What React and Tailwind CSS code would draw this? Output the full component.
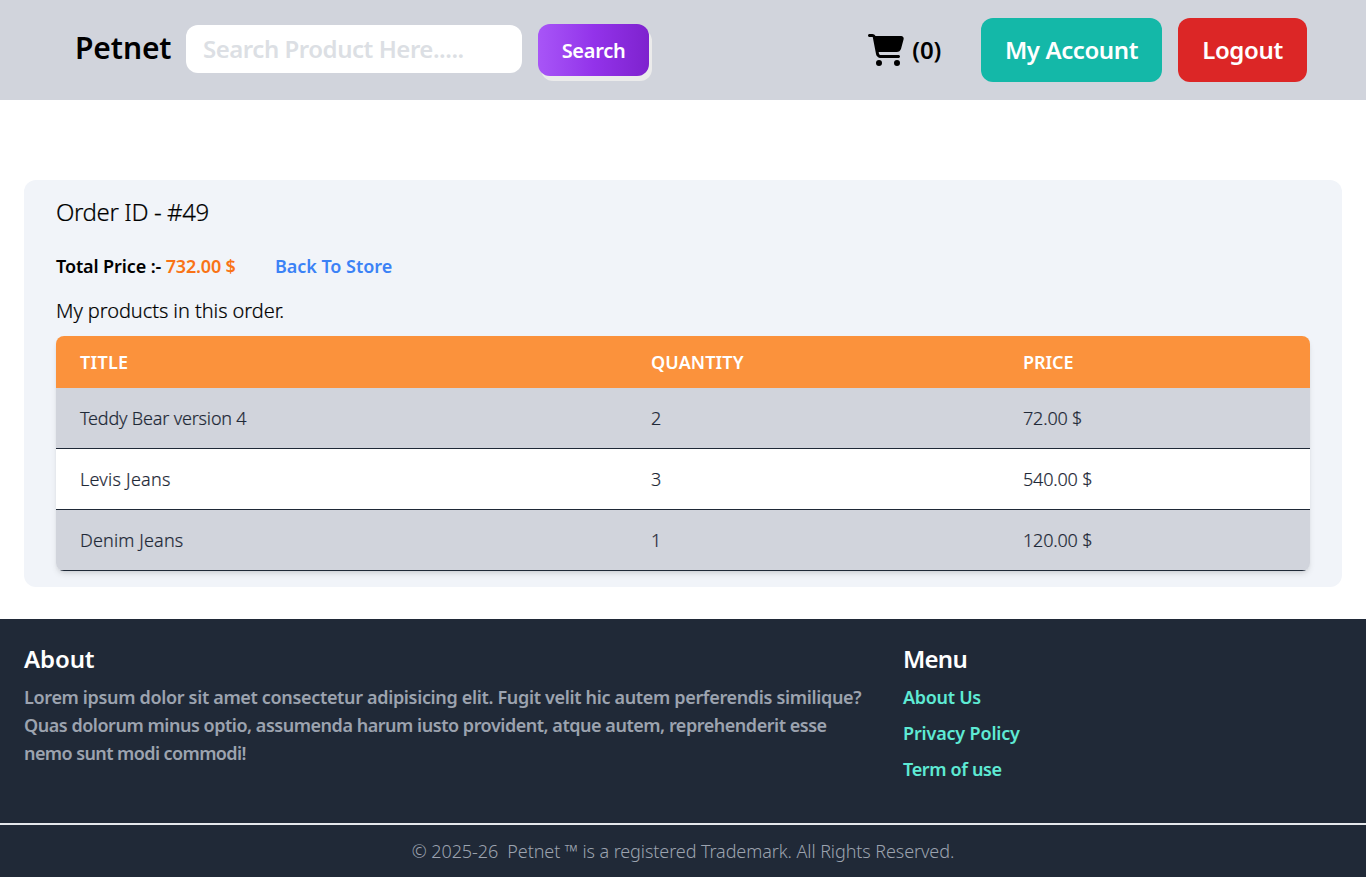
import { FaCartShopping } from "react-icons/fa6";

const items = [
  { title: "Teddy Bear version 4", spacing: "tracking-[-0.18px]", quantity: 2, price: "72.00 $" },
  { title: "Levis Jeans", spacing: "tracking-[0.25px]", quantity: 3, price: "540.00 $" },
  { title: "Denim Jeans", spacing: "tracking-[0.15px]", quantity: 1, price: "120.00 $" },
];

function Header() {
  return (
    <header className="flex h-[100px] items-center bg-[#d1d4dc] pr-[59px] pl-[75px] font-semibold">
      <a href="#" className="w-[111px] pb-[5px] text-[30px] leading-9 tracking-[-0.1px]">
        Petnet
      </a>
      <input
        type="text"
        placeholder="Search Product Here....."
        className="mb-0.5 h-12 w-[336px] rounded-xl bg-white px-[17px] pb-0.5 text-2xl tracking-[-0.47px] outline-none placeholder:text-[#dcdfe4]"
      />
      <button className="ml-4 h-[52px] w-[111px] rounded-xl bg-linear-to-r from-[#a855f7] via-[#9333ea] to-[#7e22ce] pt-0.5 text-xl tracking-[-0.3px] text-white shadow-[3px_5px_0_0_#ebebeb]">
        Search
      </button>
      <a href="#" className="ml-auto flex items-center gap-2 text-2xl tracking-[-0.2px]">
        <FaCartShopping className="h-8 w-9" />
        <span>(0)</span>
      </a>
      <a href="#" className="ml-10 flex h-16 w-[181px] items-center justify-center rounded-xl bg-[#14b8a8] text-2xl tracking-[-0.4px] text-white">
        My Account
      </a>
      <a href="#" className="ml-4 flex h-16 w-[129px] items-center justify-center rounded-xl bg-[#dc2626] text-2xl tracking-[-0.35px] text-white">
        Logout
      </a>
    </header>
  );
}

function Order() {
  return (
    <main className="mx-6 mt-20 mb-8 h-[407px] rounded-xl bg-[#f1f4f9] px-8 pt-4">
      <h1 className="text-2xl font-light tracking-[-0.4px] [-webkit-text-stroke:0.2px]">Order ID - #49</h1>
      <div className="mt-6 flex text-lg font-semibold">
        <p className="w-[219px]">
          <span className="tracking-[-0.1px]">Total Price :-</span>
          <span className="tracking-[-0.2px]"> <span className="text-[#f97316]">732.00 $</span></span>
        </p>
        <a href="#" className="tracking-[-0.05px] text-[#3b82f6]">Back To Store</a>
      </div>
      <h2 className="mt-[17px] text-xl font-light tracking-[-0.06px] [-webkit-text-stroke:0.2px]">My products in this order.</h2>
      <table className="mt-[11px] w-full table-fixed border-separate border-spacing-0 overflow-hidden rounded-lg text-left text-lg shadow-md">
        <colgroup>
          <col className="w-[571px]" />
          <col className="w-[372px]" />
          <col />
        </colgroup>
        <thead className="bg-[#fb923c] tracking-[0.1px] text-white">
          <tr className="h-[52px]">
            <th className="px-6 font-semibold tracking-[0.25px]">TITLE</th>
            <th className="px-6 font-semibold">QUANTITY</th>
            <th className="px-6 font-semibold tracking-[-0.1px]">PRICE</th>
          </tr>
        </thead>
        <tbody className="font-light text-[#1f2937] [-webkit-text-stroke:0.2px]">
          {items.map((item) => (
            <tr key={item.title} className="h-[61px] bg-white odd:bg-[#d1d4dc]">
              <td className={"border-b border-[#1f2937] px-6 " + item.spacing}>{item.title}</td>
              <td className="border-b border-[#1f2937] px-6">{item.quantity}</td>
              <td className="border-b border-[#1f2937] px-6 tracking-[-0.18px]">{item.price}</td>
            </tr>
          ))}
        </tbody>
      </table>
    </main>
  );
}

function Footer() {
  return (
    <footer className="bg-[#202937]">
      <div className="flex h-[204px] px-6 pt-6 text-lg font-semibold">
        <section className="w-[879px]">
          <h3 className="text-2xl tracking-[-0.1px] text-white">About</h3>
          <p className="mt-2 whitespace-nowrap text-[#9ca3af]">
            <span className="block tracking-[-0.335px]">Lorem ipsum dolor sit amet consectetur adipisicing elit. Fugit velit hic autem perferendis similique?</span>
            <span className="block tracking-[-0.47px]">Quas dolorum minus optio, assumenda harum iusto provident, atque autem, reprehenderit esse</span>
            <span className="block tracking-[-0.59px]">nemo sunt modi commodi!</span>
          </p>
        </section>
        <nav className="flex flex-col">
          <h3 className="text-2xl tracking-[-0.75px] text-white">Menu</h3>
          <a href="#" className="mt-2 tracking-[-0.3px] text-[#5eead4]">About Us</a>
          <a href="#" className="mt-2 tracking-[-0.17px] text-[#5eead4]">Privacy Policy</a>
          <a href="#" className="mt-2 tracking-[-0.35px] text-[#5eead4]">Term of use</a>
        </nav>
      </div>
      <p className="h-[54px] border-t-2 border-[#e5e7eb] pt-3 text-center text-lg font-light tracking-[-0.09px] whitespace-pre text-[#9ca3af]">
        {"© 2025-26  Petnet ™ is a registered Trademark. All Rights Reserved."}
      </p>
    </footer>
  );
}

export default function App() {
  return (
    <div className="min-h-screen bg-white font-['Noto_Sans',sans-serif] text-black">
      <Header />
      <Order />
      <Footer />
    </div>
  );
}
